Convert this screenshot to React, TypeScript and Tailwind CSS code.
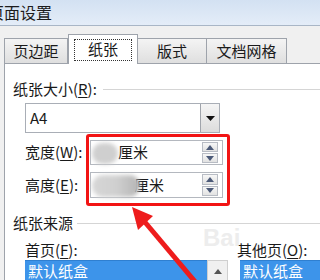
import React from "react";

const F = { fontFamily: '"Noto Sans CJK SC", "Noto Sans", sans-serif' };

function U({ c }: { c: string }) {
  return <span className="underline underline-offset-2">{c}</span>;
}

function Spin() {
  return (
    <div className="flex flex-col w-[16px] h-full py-[1px] gap-[1px] mr-[4px]">
      <div className="flex-1 flex items-center justify-center border border-[#b8bcc4] bg-gradient-to-b from-[#f7f7f7] to-[#e2e2e2]">
        <svg width="8" height="5" viewBox="0 0 8 5"><path d="M0 5 L4 0 L8 5 Z" fill="#4c5a78" /></svg>
      </div>
      <div className="flex-1 flex items-center justify-center border border-[#b8bcc4] bg-gradient-to-b from-[#f7f7f7] to-[#e2e2e2]">
        <svg width="8" height="5" viewBox="0 0 8 5"><path d="M0 0 L8 0 L4 5 Z" fill="#4c5a78" /></svg>
      </div>
    </div>
  );
}

export default function App() {
  return (
    <div className="relative w-[320px] h-[280px] overflow-hidden bg-[#f0f0f0] flex flex-col text-[#1a1a1a]" style={F}>
      {/* title bar */}
      <div className="h-[26px] shrink-0 bg-gradient-to-b from-[#d3e1f2] to-[#e4edf8] border-b border-[#a9b6c6] relative overflow-hidden">
        <div className="absolute left-[-12px] top-[3px] text-[16px] leading-[18px] text-[#1c1c1c]">页面设置</div>
      </div>
      {/* tabs */}
      <div className="h-[37px] shrink-0 flex items-end pl-[4px] relative z-10">
        <div className="w-[64px] h-[25px] border border-b-0 border-[#9ea3ab] bg-gradient-to-b from-[#f4f4f4] to-[#dfdfdf] flex items-center justify-center text-[15px]">页边距</div>
        <div className="w-[70px] h-[30px] border border-b-0 border-[#9ea3ab] bg-white -mb-px flex items-center justify-center">
          <div className="w-[58px] h-[22px] border border-dotted border-[#333] flex items-center justify-center text-[15px]">纸张</div>
        </div>
        <div className="w-[69px] h-[25px] border border-b-0 border-l-0 border-[#9ea3ab] bg-gradient-to-b from-[#f4f4f4] to-[#dfdfdf] flex items-center justify-center text-[15px]">版式</div>
        <div className="w-[80px] h-[25px] border border-b-0 border-l-0 border-[#9ea3ab] bg-gradient-to-b from-[#f4f4f4] to-[#dfdfdf] flex items-center justify-center text-[15px]">文档网格</div>
      </div>
      {/* panel */}
      <div className="flex-1 ml-[4px] bg-white border-l border-t border-[#9ea3ab] pl-[8px] flex flex-col">
        <div className="mt-[16px] h-[18px] flex items-center text-[15px] leading-[18px]">
          <span>纸张大小(<U c="R" />):</span>
          <div className="flex-1 ml-[6px] border-t border-[#d5d5d5]" />
        </div>
        <div className="mt-[5px] ml-[12px] w-[195px] h-[30px] border border-[#a9aeb6] bg-white flex items-center">
          <span className="flex-1 pl-[4px] text-[15px]">A4</span>
          <div className="w-[19px] h-full border-l border-[#a0a4ab] bg-gradient-to-b from-[#f5f5f5] to-[#dcdcdc] flex items-center justify-center">
            <svg width="9" height="5" viewBox="0 0 9 5"><path d="M0 0 L9 0 L4.5 5 Z" fill="#111" /></svg>
          </div>
        </div>
        <div className="mt-[7px] ml-[12px] h-[25px] flex items-center">
          <span className="w-[65px] text-[15px]">宽度(<U c="W" />):</span>
          <div className="relative w-[133px] h-full border border-[#b4b8bf] bg-white flex items-center">
            <span className="flex-1 pl-[27px] text-[15px]">厘米</span>
            <Spin />
            <div className="absolute left-[1px] top-[2px] w-[26px] h-[21px] rounded-full bg-[#cfcfcf] blur-[2px]" />
          </div>
        </div>
        <div className="mt-[7px] ml-[12px] h-[26px] flex items-center">
          <span className="w-[65px] text-[15px]">高度(<U c="E" />):</span>
          <div className="relative w-[133px] h-full border border-[#b4b8bf] bg-white flex items-center">
            <span className="flex-1 pl-[43px] text-[15px]">厘米</span>
            <Spin />
            <div className="absolute left-[1px] top-[2px] w-[48px] h-[22px] rounded-full bg-gradient-to-r from-[#d6d6d6] via-[#d0d0d0] to-[#b4b4b4] blur-[2px]" />
          </div>
        </div>
        <div className="mt-[16px] h-[18px] flex items-center text-[15px] leading-[18px]">
          <span>纸张来源</span>
          <div className="flex-1 ml-[4px] border-t border-[#d5d5d5]" />
        </div>
        <div className="mt-[10px] ml-[12px] flex">
          <div className="flex flex-col w-[211px]">
            <span className="h-[16px] text-[15px] leading-[16px]">首页(<U c="F" />):</span>
            <div className="mt-[2px] h-[22px] flex">
              <div className="flex-1 bg-[#3d94ea] text-white text-[15px] leading-[20px] pl-[3px] border-t border-[#2f7fd0]">默认纸盒</div>
              <div className="w-[21px] bg-[#f0f0f0] border border-[#cfcfcf] flex items-center justify-center">
                <svg width="8" height="5" viewBox="0 0 8 5"><path d="M0 5 L4 0 L8 5 Z" fill="#555" /></svg>
              </div>
            </div>
          </div>
          <div className="flex flex-col ml-[9px]">
            <span className="h-[16px] text-[15px] leading-[16px] whitespace-nowrap">其他页(<U c="O" />):</span>
            <div className="mt-[2px] ml-[3px] h-[22px] w-[80px] bg-[#3d94ea] text-white text-[15px] leading-[20px] pl-[3px] border-t border-[#2f7fd0]">默认纸盒</div>
          </div>
        </div>
      </div>

      {/* watermark */}
      <div className="absolute left-[203px] top-[226px] text-[24px] leading-[24px] text-[#ededed] font-bold pointer-events-none" style={{ fontFamily: '"Liberation Sans", sans-serif' }}>Bai</div>

      {/* red highlight */}
      <div className="absolute left-[86px] top-[134px] w-[144px] h-[72px] border-[3px] border-[#f21414] rounded-[3px] pointer-events-none" />
      <svg className="absolute left-0 top-0 pointer-events-none" width="320" height="280" viewBox="0 0 320 280">
        <line x1="197" y1="284" x2="144" y2="221" stroke="#ee1c1c" strokeWidth="5" />
        <polygon points="132,207 153,216 138,230" fill="#ee1c1c" />
      </svg>
    </div>
  );
}
